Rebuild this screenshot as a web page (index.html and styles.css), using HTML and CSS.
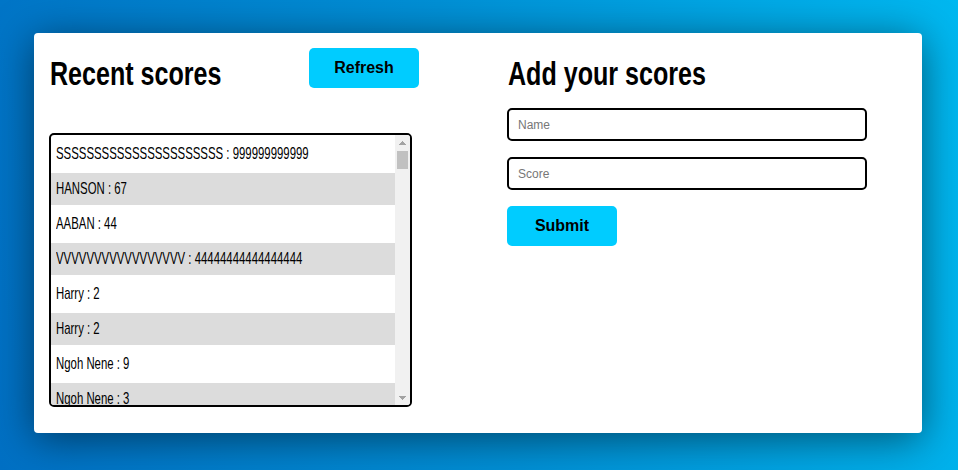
FILE: index.html
```html
<!DOCTYPE html>
<html lang="en">
<head>
<meta charset="utf-8">
<title>Leaderboard</title>
<link rel="stylesheet" href="styles.css">
</head>
<body>
<main class="card">
  <section class="recent">
    <div class="recent-head">
      <h2 class="title"><span>Recent scores</span></h2>
      <button class="btn" type="button">Refresh</button>
    </div>
    <div class="scorebox">
      <ul class="scores">
        <li><span>SSSSSSSSSSSSSSSSSSSSSS : 999999999999</span></li>
        <li><span>HANSON : 67</span></li>
        <li><span>AABAN : 44</span></li>
        <li><span>VVVVVVVVVVVVVVVVV : 44444444444444444</span></li>
        <li><span>Harry : 2</span></li>
        <li><span>Harry : 2</span></li>
        <li><span>Ngoh Nene : 9</span></li>
        <li><span>Ngoh Nene : 3</span></li>
        <li><span>Ngoh Nene : 12</span></li>
        <li><span>John : 45</span></li>
        <li><span>Mary : 78</span></li>
        <li><span>Player : 100</span></li>
        <li><span>HANSON : 55</span></li>
        <li><span>AABAN : 21</span></li>
        <li><span>Harry : 7</span></li>
        <li><span>Ngoh Nene : 5</span></li>
        <li><span>Test : 1</span></li>
        <li><span>Test : 2</span></li>
        <li><span>John : 30</span></li>
        <li><span>Mary : 64</span></li>
      </ul>
      <div class="scrollbar" aria-hidden="true">
        <div class="sb-btn sb-up"></div>
        <div class="sb-track"><div class="sb-thumb"></div></div>
        <div class="sb-btn sb-down"></div>
      </div>
    </div>
  </section>
  <section class="add">
    <h2 class="title"><span>Add your scores</span></h2>
    <form class="form">
      <input class="field" type="text" placeholder="Name">
      <input class="field" type="text" placeholder="Score">
      <button class="btn" type="button">Submit</button>
    </form>
  </section>
</main>
</body>
</html>
```
FILE: styles.css
```css
html, body {
  margin: 0;
}

body {
  min-height: 470px;
  box-sizing: border-box;
  padding: 33px 36px 37px 34px;
  background: linear-gradient(80deg, #0070c4 0%, #0090d6 50%, #00b8f0 100%);
}

.card {
  height: 400px;
  box-sizing: border-box;
  background: #fff;
  border-radius: 4px;
  box-shadow: 0 6px 40px rgba(0, 0, 0, 0.5);
  padding: 15px 16px;
  display: grid;
  grid-template-columns: 370px 1fr;
  column-gap: 88px;
  align-items: start;
}

.title {
  margin: 6px 0 0;
  font-family: "Liberation Sans", Arial, sans-serif;
  font-weight: bold;
  font-size: 33px;
  line-height: 40px;
  color: #000;
  white-space: nowrap;
}

.title span {
  display: inline-block;
  transform: scaleX(0.76);
  transform-origin: 0 50%;
}

.recent-head {
  display: flex;
  justify-content: space-between;
  align-items: flex-start;
}

.btn {
  width: 110px;
  height: 40px;
  border: none;
  border-radius: 5px;
  background: #00ccff;
  color: #000;
  font-family: "Liberation Sans", Arial, sans-serif;
  font-weight: bold;
  font-size: 16px;
  padding: 0;
  cursor: pointer;
}

.recent-head .btn {
  margin-right: 1px;
}

.scorebox {
  margin: 39px 0 0 -1px;
  width: 363px;
  height: 274px;
  box-sizing: border-box;
  border: 2px solid #000;
  border-radius: 5px;
  overflow: hidden;
  display: flex;
}

.scores {
  flex: 1;
  min-width: 0;
  list-style: none;
  margin: 0;
  padding: 3px 0 0;
  overflow: hidden;
  font-family: "Liberation Sans", Arial, sans-serif;
  font-size: 17px;
  color: #000;
}

.scores li {
  height: 32px;
  line-height: 32px;
  margin-bottom: 3px;
  padding-left: 5px;
  white-space: nowrap;
}

.scores li span {
  display: inline-block;
  transform: scaleX(0.67);
  transform-origin: 0 50%;
}

.scores li:nth-child(even) {
  background: #dcdcdc;
}

.scrollbar {
  width: 15px;
  flex: none;
  background: #f1f1f1;
  display: flex;
  flex-direction: column;
}

.sb-btn {
  height: 15px;
  flex: none;
  background-repeat: no-repeat;
  background-position: center;
  background-size: 7px 4px;
}

.sb-up {
  background-image: conic-gradient(from 139deg at 50% 0, #a3a3a3 0deg 82deg, transparent 82deg);
}

.sb-down {
  background-image: conic-gradient(from -41deg at 50% 100%, #a3a3a3 0deg 82deg, transparent 82deg);
}

.sb-track {
  flex: 1;
  padding: 1px 2px;
}

.sb-thumb {
  height: 18px;
  background: #c1c1c1;
}

.form {
  margin-top: 14px;
  display: flex;
  flex-direction: column;
  align-items: flex-start;
  gap: 16px;
}

.field {
  width: 360px;
  height: 33px;
  box-sizing: border-box;
  margin-left: -1px;
  border: 2px solid #000;
  border-radius: 5px;
  padding: 0 9px;
  font-family: "Liberation Sans", Arial, sans-serif;
  font-size: 12px;
  color: #000;
  outline: none;
}

.field::placeholder {
  color: #777;
}

.form .btn {
  margin-left: -1px;
}
```
